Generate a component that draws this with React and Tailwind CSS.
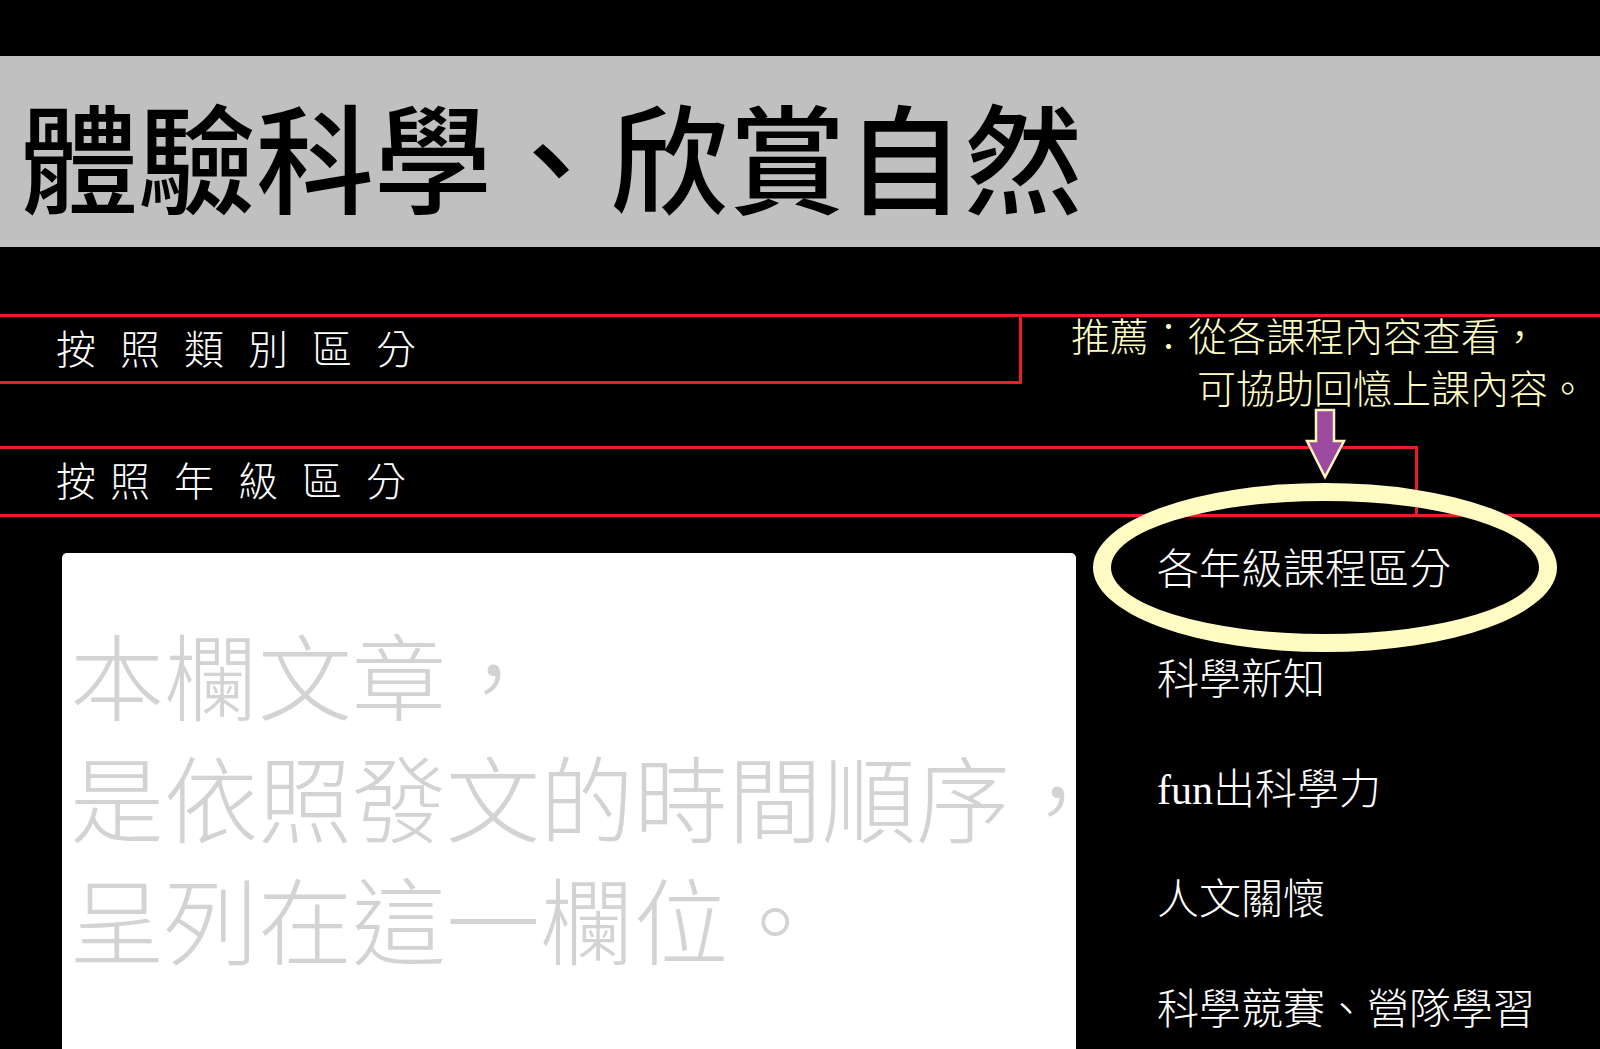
import React from 'react';

const cjk = { fontFamily: "'Liberation Serif', 'Noto Sans CJK TC', serif" };

const menuItems = ['各年級課程區分', '科學新知', 'fun出科學力', '人文關懷', '科學競賽、營隊學習'];

const DownArrow = () => (
  <svg className="absolute left-[1305px] top-[408px] z-20" width="42" height="72" viewBox="0 0 42 72">
    <path d="M11 2 H29 V33 H39 L20 69 L2 33 H11 Z" fill="#9b4aa0" stroke="#fff6bd" strokeWidth="2.5" strokeLinejoin="miter" />
  </svg>
);

const App = () => {
  return (
    <div className="relative w-[1600px] h-[1049px] overflow-hidden bg-black" style={cjk}>
      {/* Title band */}
      <div className="h-[56px]" />
      <div className="h-[191px] bg-[#c0c0c0] pl-[20px] pt-[51px]">
        <h1 className="text-[118px] leading-none font-medium text-black whitespace-nowrap">體驗科學、欣賞自然</h1>
      </div>
      <div className="h-[67px]" />

      {/* Category row */}
      <div className="flex h-[70px] border-t-[3px] border-[#ee1c24]">
        <div className="w-[1022px] h-[67px] shrink-0 border-r-[3px] border-b-[3px] border-[#ee1c24] pl-[56px] pt-[14px]">
          <span className="text-[40px] leading-none font-light text-white tracking-[24px] whitespace-nowrap">按照類別區分</span>
        </div>
        <div className="ml-[49px] -mt-[5px] text-[39px] leading-[52px] font-light text-[#ffffc4] whitespace-nowrap">
          <p>推薦：從各課程內容查看，</p>
          <p className="pl-[126px]">可協助回憶上課內容。</p>
        </div>
      </div>
      <div className="h-[62px]" />

      {/* Grade row */}
      <div className="border-b-[3px] border-[#ee1c24]">
        <div className="w-[1418px] h-[68px] border-t-[3px] border-r-[3px] border-[#ee1c24] pl-[56px] pt-[14px]">
          <span className="text-[40px] leading-none font-light text-white whitespace-nowrap">
            <span className="tracking-[14px]">按照</span>
            <span className="ml-[10px] tracking-[24px]">年級區分</span>
          </span>
        </div>
      </div>

      {/* Lower content */}
      <div className="flex">
        <div className="ml-[62px] mt-[36px] w-[1014px] h-[600px] shrink-0 rounded-[5px] bg-white pl-[8px] pt-[68px]">
          <p className="text-[94px] leading-[122px] font-light text-[#d3d3d3] whitespace-nowrap">
            本欄文章，<br />
            是依照發文的時間順序，<br />
            呈列在這一欄位。
          </p>
        </div>
        <ul className="ml-[81px] pt-[32px] flex flex-col gap-[68px]">
          {menuItems.map((item) => (
            <li key={item} className="text-[42px] leading-[42px] font-light text-white whitespace-nowrap">
              {item}
            </li>
          ))}
        </ul>
      </div>

      {/* Highlight overlays */}
      <DownArrow />
      <div className="absolute left-[1093px] top-[483px] w-[464px] h-[169px] rounded-[50%] border-[18px] border-[#fffbc2] z-10" />
    </div>
  );
};

export default App;
